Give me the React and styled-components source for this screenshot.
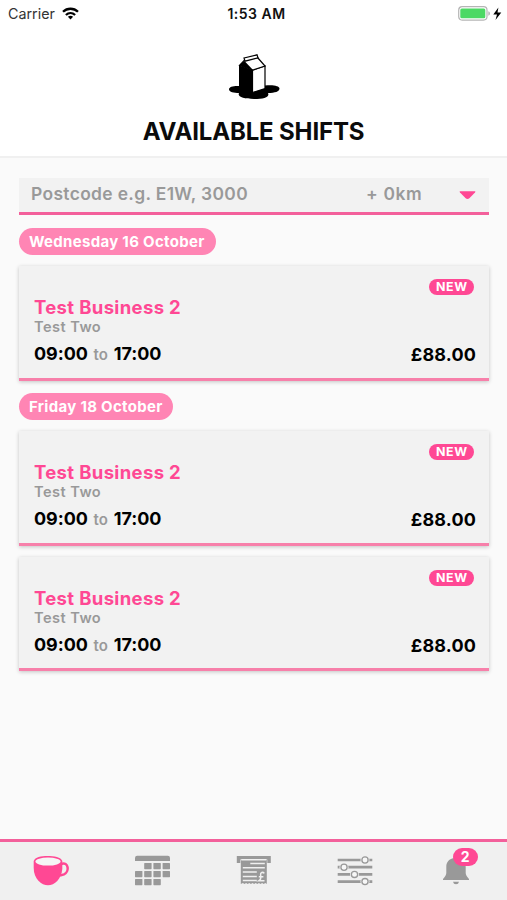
import React from "react";
import styled, { createGlobalStyle } from "styled-components";

const PINK = "#ff4894";
const GREY = "#999999";

const GlobalStyle = createGlobalStyle`
  * { box-sizing: border-box; }
  body { margin: 0; background: #fafafa; }
`;

const Screen = styled.div`
  width: 507px;
  height: 900px;
  display: flex;
  flex-direction: column;
  overflow: hidden;
  background: #fafafa;
  font-family: Inter, "Open Sans", sans-serif;
  font-weight: 700;
`;

const Header = styled.header`
  height: 158px;
  flex: none;
  background: #fff;
  border-bottom: 2px solid #f0f0f0;
  display: flex;
  flex-direction: column;
  align-items: center;
`;

const StatusBar = styled.div`
  width: 100%;
  height: 28px;
  padding: 0 5px 1px 8px;
  display: grid;
  grid-template-columns: 1fr auto 1fr;
  align-items: center;
  font-size: 14px;
  line-height: 20px;
  color: #111;
`;

const Carrier = styled.div`
  display: flex;
  align-items: center;
  gap: 7px;
  font-weight: 400;
  font-size: 14.3px;
  color: #333;
`;

const Clock = styled.div`
  padding-left: 3px;
  font-weight: 600;
  letter-spacing: 0.5px;
`;

const Power = styled.div`
  display: flex;
  justify-content: flex-end;
  align-items: center;
`;

const Logo = styled.svg`
  display: block;
  margin-top: 26px;
`;

const Title = styled.h1`
  margin: 17px 0 0;
  font-size: 24px;
  line-height: 30px;
  font-weight: 700;
  letter-spacing: -0.15px;
  color: #0b0b0b;
`;

const Content = styled.main`
  flex: 1;
  padding: 20px 18px 0 19px;
  display: flex;
  flex-direction: column;
  align-items: flex-start;
`;

const Filter = styled.div`
  width: 470px;
  height: 37px;
  padding: 0 13px 2px 12px;
  display: flex;
  align-items: center;
  background: #f2f2f2;
  border-bottom: 3px solid #f3609b;
  color: ${GREY};
  font-size: 17.4px;
  line-height: 24px;
  font-weight: 600;

  svg { margin-top: 1px; }
`;

const Postcode = styled.span`
  flex: 1;
  letter-spacing: 0.36px;
`;

const Distance = styled.span`
  width: 93px;
  letter-spacing: 0.65px;
`;

const DatePill = styled.h2`
  margin: ${(p) => (p.$first ? "13px" : "12px")} 0 11px;
  height: 27px;
  width: ${(p) => p.$width}px;
  padding-left: 10px;
  border-radius: 14px;
  background: #ff85b4;
  color: #fff;
  font-size: 15px;
  line-height: 27px;
  font-weight: 700;
  white-space: nowrap;
  letter-spacing: 0.3px;
`;

const Card = styled.article`
  width: 470px;
  height: 115px;
  padding: 12px 13px 0 15px;
  background: #f2f2f2;
  border-bottom: 3px solid #f780aa;
  box-shadow: 0 1px 4px rgba(0, 0, 0, 0.22);
  display: flex;
  justify-content: space-between;

  & + & { margin-top: 11px; height: 114px; }
`;

const Details = styled.div`
  padding-top: 18px;
  display: flex;
  flex-direction: column;
`;

const Business = styled.h3`
  margin: 0;
  color: ${PINK};
  font-size: 18.5px;
  line-height: 22px;
  font-weight: 700;
  letter-spacing: 0.35px;
`;

const Role = styled.div`
  color: ${GREY};
  font-size: 14.6px;
  line-height: 19px;
  font-weight: 600;
  letter-spacing: 0.45px;
`;

const Hours = styled.div`
  margin-top: 6px;
  display: flex;
  align-items: baseline;
  gap: 5.5px;
  color: #000;
  font-size: 18px;
  line-height: 22px;
  letter-spacing: -0.05px;
`;

const To = styled.span`
  color: ${GREY};
  font-size: 15px;
  font-weight: 600;
  letter-spacing: 0.3px;
`;

const Aside = styled.div`
  display: flex;
  flex-direction: column;
  align-items: flex-end;
`;

const NewTag = styled.span`
  width: 45px;
  height: 16px;
  margin-right: 2px;
  margin-top: 1px;
  border-radius: 8px;
  background: ${PINK};
  color: #fff;
  font-size: 12.4px;
  line-height: 16px;
  text-align: center;
  letter-spacing: 0.6px;
  text-indent: 0.6px;
`;

const Pay = styled.span`
  margin-top: 49px;
  color: #000;
  font-size: 18px;
  line-height: 22px;
  letter-spacing: 0.15px;
`;

const TabBar = styled.nav`
  height: 61px;
  flex: none;
  border-top: 3px solid #f3609b;
  background: #f0f0f0;
  display: grid;
  grid-template-columns: repeat(5, 1fr);
`;

const Tab = styled.div`
  position: relative;
  display: flex;
  justify-content: center;
  padding-top: ${(p) => p.$top ?? 13}px;

  svg { display: block; }
`;

const Badge = styled.span`
  position: absolute;
  left: 47px;
  top: 6px;
  width: 25px;
  height: 18px;
  border-radius: 9px;
  background: ${PINK};
  color: #fff;
  font-size: 14px;
  line-height: 18px;
  text-align: center;
`;

const WifiIcon = () => (
  <svg width="17" height="13" viewBox="0 0 17 13">
    <g fill="none" stroke="#000" strokeWidth="2.3">
      <path d="M1 4.8C5.2.7 11.8.7 16 4.8" />
      <path d="M3.9 8C6.6 5.5 10.4 5.5 13.1 8" />
    </g>
    <path d="M5.9 9.8Q8.5 7.8 11.1 9.8L8.5 12.5Z" />
  </svg>
);

const BatteryIcon = () => (
  <svg width="44" height="16" viewBox="0 0 44 16">
    <rect x=".7" y=".7" width="28.3" height="13.4" rx="3.5" fill="#fff" stroke="#b5b5b5" strokeWidth="1.2" />
    <rect x="2.3" y="2.5" width="25" height="9.8" rx="1.5" fill="#4cd964" />
    <path d="M30.3 5.2Q32 5.7 32 7.5T30.3 9.8Z" fill="#b5b5b5" />
    <path d="M40.4 1.5L35.3 8.6H39L37.5 14L43.3 6.5H39.5Z" fill="#000" />
  </svg>
);

const MilkLogo = () => (
  <Logo width="52" height="46" viewBox="0 0 52 46">
    <path d="M12 32C6 31.5 1 32.7 1 35.2C1 38 6 39 11 39C9 43 16 45 26 45C36 45 42 43 40 39C47 39 51.5 37.5 51.5 34.5C51.5 31.8 45 30.5 37 31.5Z" />
    <path d="M11 11.5L25 16V38L11 35Z" />
    <path d="M24.5 16L37 12V34.5L24.5 38.5Z" fill="#fff" stroke="#000" strokeWidth="1.2" />
    <path d="M11.5 11.5L17 5.5L29.5 3.5L37 12L25 16Z" fill="#fff" stroke="#000" strokeWidth="1.2" />
    <path d="M11 11.5L16.5 7L25 16Z" />
    <path d="M16 4L29 .8L30 3.8L17 7.2Z" fill="#fff" stroke="#000" strokeWidth="1.2" />
  </Logo>
);

const ChevronIcon = () => (
  <svg width="17" height="10" viewBox="0 0 17 10">
    <path d="M1.2 1.2H15.8Q17 1.2 16 2.5L10.6 8Q8.5 10 6.4 8L1 2.5Q0 1.2 1.2 1.2Z" fill={PINK} />
  </svg>
);

const CupIcon = () => (
  <svg width="36" height="32" viewBox="0 0 36 32">
    <path d="M28 9C36 6 36.5 17 31 19.4L27 20.5" fill="none" stroke={PINK} strokeWidth="2.5" />
    <path d="M.7 6C2 2 8 1 14.5 1S28 2 29.3 6V14C28.5 24 21.5 30.3 15 30.3S.7 24 .7 13Z" fill={PINK} />
    <ellipse cx="15" cy="6.6" rx="12.6" ry="4" fill="#f5f5f5" />
  </svg>
);

const CALENDAR_ROWS = [[1, 2, 3], [0, 1, 2, 3], [0, 1, 2]];

const CalendarIcon = () => (
  <svg width="36" height="32" viewBox="0 0 36 32" fill={GREY}>
    <path d="M1 6V3Q1 .8 3.2 .8H33.8Q36 .8 36 3V6Z" />
    {CALENDAR_ROWS.map((cols, row) =>
      cols.map((col) => (
        <rect key={`${row}-${col}`} x={1 + col * 9.2} y={8 + row * 8} width="7.4" height="6.2" rx=".6" />
      ))
    )}
  </svg>
);

const PayslipIcon = () => (
  <svg width="36" height="32" viewBox="0 0 36 32">
    <g transform="translate(1.3 0)">
      <path d="M.5 1H34.5V8H31V4.5H4V8H.5Z" fill={GREY} />
      <path d="M4.5 5H30.5V29L29 28L27.4 29L25.8 28L24.2 29L22.6 28L21 29L19.4 28L17.8 29L16.2 28L14.6 29L13 28L11.4 29L9.8 28L8.2 29L6.6 28L4.5 29Z" fill={GREY} />
      <path d="M5 4.7H30M14 8.6H28.5M6.5 12.8H28.5M6.5 17H20.5M6.5 21.4H20.5M6.5 25.6H20.5" stroke="#f0f0f0" strokeWidth="1.5" fill="none" />
      <path d="M28 18.4C26.5 16.5 23.9 17.5 24.3 20C24.7 22 25.2 24.3 22.7 25.7H28.2M22.5 21.7H27.1" fill="none" stroke="#f0f0f0" strokeWidth="1.5" />
    </g>
  </svg>
);

const SLIDERS = [28, 7, 17.5, 28];

const SlidersIcon = () => (
  <svg width="36" height="32" viewBox="0 0 36 32" stroke={GREY}>
    {SLIDERS.map((x, i) => (
      <g key={i}>
        <path d={`M.7 ${5 + i * 7.2}H35.3`} strokeWidth="2.7" />
        <circle cx={x} cy={5 + i * 7.2} r="4.5" fill="#f0f0f0" stroke="none" />
        <circle cx={x} cy={5 + i * 7.2} r="3.1" fill="#f7f7f7" strokeWidth="1.3" />
      </g>
    ))}
  </svg>
);

const BellIcon = () => (
  <svg width="28" height="32" viewBox="0 0 28 32" fill={GREY}>
    <path d="M12 5Q12 3 14 3T16 5C21.5 6 23.7 9.5 23.7 14V20Q23.7 22.3 27 26V27H1V26Q4.3 22.3 4.3 20V14C4.3 9.5 6.5 6 12 5Z" />
    <path d="M11 28.7H17Q16.5 31.2 14 31.2T11 28.7Z" />
  </svg>
);

const ShiftCard = () => (
  <Card>
    <Details>
      <Business>Test Business 2</Business>
      <Role>Test Two</Role>
      <Hours>
        <span>09:00</span>
        <To>to</To>
        <span>17:00</span>
      </Hours>
    </Details>
    <Aside>
      <NewTag>NEW</NewTag>
      <Pay>£88.00</Pay>
    </Aside>
  </Card>
);

export default function App() {
  return (
    <Screen>
      <GlobalStyle />
      <Header>
        <StatusBar>
          <Carrier>Carrier <WifiIcon /></Carrier>
          <Clock>1:53 AM</Clock>
          <Power><BatteryIcon /></Power>
        </StatusBar>
        <MilkLogo />
        <Title>AVAILABLE SHIFTS</Title>
      </Header>
      <Content>
        <Filter>
          <Postcode>Postcode e.g. E1W, 3000</Postcode>
          <Distance>+ 0km</Distance>
          <ChevronIcon />
        </Filter>
        <DatePill $first $width={197}>Wednesday 16 October</DatePill>
        <ShiftCard />
        <DatePill $width={154}>Friday 18 October</DatePill>
        <ShiftCard />
        <ShiftCard />
      </Content>
      <TabBar>
        <Tab><CupIcon /></Tab>
        <Tab><CalendarIcon /></Tab>
        <Tab><PayslipIcon /></Tab>
        <Tab><SlidersIcon /></Tab>
        <Tab $top={11}><BellIcon /><Badge>2</Badge></Tab>
      </TabBar>
    </Screen>
  );
}
